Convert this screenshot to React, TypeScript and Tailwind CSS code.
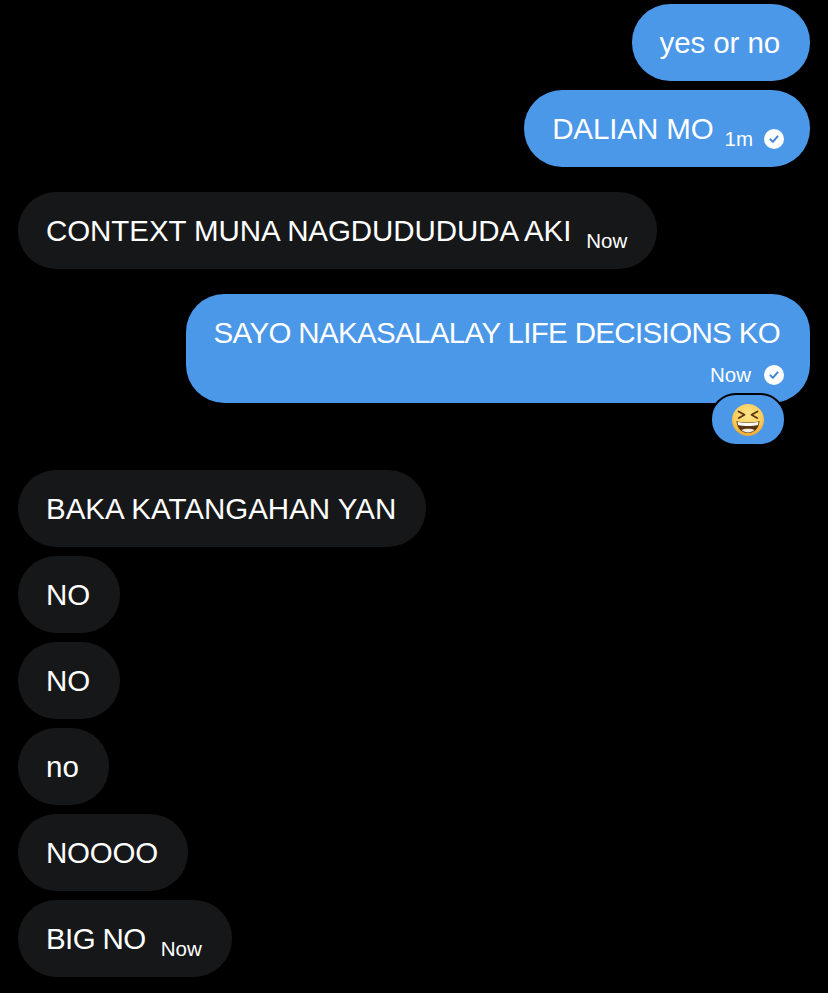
const FONT = "font-['Liberation_Sans',Arial,sans-serif]";

function Check() {
  return (
    <svg width="20" height="20" viewBox="0 0 20 20" className="shrink-0">
      <circle cx="10" cy="10" r="10" fill="#ffffff" />
      <path d="M6.4 10.4 L8.9 12.9 L13.6 7.4" fill="none" stroke="#3f86d6" strokeWidth="2" strokeLinecap="round" strokeLinejoin="round" />
    </svg>
  );
}

function Laugh() {
  return (
    <svg width="32" height="32" viewBox="0 0 32 32">
      <defs>
        <radialGradient id="face" cx="50%" cy="35%" r="65%">
          <stop offset="0%" stopColor="#fde68a" />
          <stop offset="70%" stopColor="#f9cb58" />
          <stop offset="100%" stopColor="#eba637" />
        </radialGradient>
      </defs>
      <circle cx="16" cy="16" r="16" fill="url(#face)" />
      <path d="M6.5 7.5 L12.5 10.8 L6.8 14" fill="none" stroke="#5b3510" strokeWidth="1.8" strokeLinecap="round" strokeLinejoin="round" />
      <path d="M25.5 7.5 L19.5 10.8 L25.2 14" fill="none" stroke="#5b3510" strokeWidth="1.8" strokeLinecap="round" strokeLinejoin="round" />
      <path d="M4.5 17 C10 19 22 19 27.5 17 C27 25 22 29 16 29 C10 29 5 25 4.5 17 Z" fill="#5b3510" />
      <path d="M5.6 17.8 C11 19.4 21 19.4 26.4 17.8 L26 21 C20 22.4 12 22.4 6 21 Z" fill="#ffffff" />
      <path d="M9.5 26 C13 24.4 19 24.4 22.5 26 C20.5 27.8 18 28.4 16 28.4 C14 28.4 11.5 27.8 9.5 26 Z" fill="#f3eadf" />
    </svg>
  );
}

function Bubble({ text, mine, time, check, mt, track = "tracking-[0px]" }: { text: string; mine?: boolean; time?: string; check?: boolean; mt: string; track?: string }) {
  return (
    <div className={`flex ${mine ? "justify-end pr-[18px]" : "justify-start pl-[18px]"} ${mt}`}>
      <div className={`flex h-[77px] items-center rounded-[38px] pl-[28px] text-[29.5px] text-white ${check ? "pr-[26px]" : "pr-[30px]"} ${mine ? "bg-[#4b97e8]" : "bg-[#161719]"}`}>
        <span className={`mt-[2px] ${track}`}>{text}</span>
        {time && <span className={`mt-[21px] text-[20.5px] ${check ? "ml-[11px]" : "ml-[15px]"}`}>{time}</span>}
        {check && <span className="ml-[11px] mt-[20px] flex"><Check /></span>}
      </div>
    </div>
  );
}

export default function App() {
  return (
    <div className={`h-[993px] w-[828px] overflow-hidden bg-black pt-[4px] ${FONT}`}>
      <Bubble mine text="yes or no" track="tracking-[-0.1px]" mt="" />
      <Bubble mine text="DALIAN MO" track="tracking-[-0.1px]" time="1m" check mt="mt-[9px]" />
      <Bubble text="CONTEXT MUNA NAGDUDUDUDA AKI" track="tracking-[-0.07px]" time="Now" mt="mt-[25px]" />

      {/* long message with the time under it */}
      <div className="mt-[25px] flex justify-end pr-[18px]">
        <div className="relative h-[109px] rounded-[38px] bg-[#4b97e8] pl-[28px] pr-[30px] pt-[22px] text-white">
          <div className="text-[29.5px] leading-[34px] tracking-[-0.65px]">SAYO NAKASALALAY LIFE DECISIONS KO</div>
          <div className="mr-[-4px] mt-[14px] flex items-center justify-end text-[20.5px] leading-[22px]">
            <span>Now</span>
            <span className="ml-[13px] flex"><Check /></span>
          </div>
          <div className="absolute right-[24px] top-[99px] flex h-[53px] w-[76px] items-center justify-center rounded-[26px] border-[2px] border-black bg-[#4b97e8]">
            <Laugh />
          </div>
        </div>
      </div>

      <Bubble text="BAKA KATANGAHAN YAN" mt="mt-[67px]" />
      <Bubble text="NO" mt="mt-[9px]" />
      <Bubble text="NO" mt="mt-[9px]" />
      <Bubble text="no" mt="mt-[9px]" />
      <Bubble text="NOOOO" track="tracking-[-0.2px]" mt="mt-[9px]" />
      <Bubble text="BIG NO" track="tracking-[-0.6px]" time="Now" mt="mt-[9px]" />
    </div>
  );
}
